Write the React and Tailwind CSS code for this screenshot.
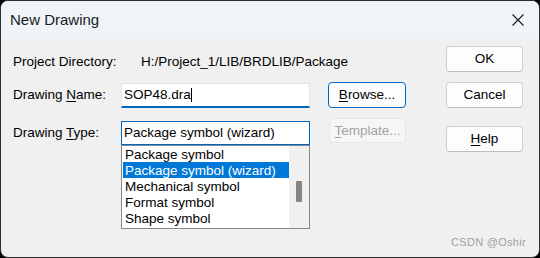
import React from "react";

const font = { fontFamily: '"Liberation Sans", Arial, sans-serif' };

function Btn({ children, className = "" }) {
  return (
    <div
      className={
        "flex items-center justify-center rounded-[4px] text-[13.5px] leading-none " +
        className
      }
    >
      {children}
    </div>
  );
}

export default function App() {
  return (
    <div className="w-[540px] h-[258px] bg-black" style={font}>
      <div className="relative w-full h-full rounded-[8px] border border-[#2e2e2e] overflow-hidden bg-[#f0f0f0] flex flex-col text-black">
        {/* Title bar */}
        <div className="h-[38px] shrink-0 bg-[#eff4f9] flex items-center justify-between pl-[9px] pr-[15px]">
          <span className="text-[15px] leading-none text-[#1a1a1a] -mt-[1px]">New Drawing</span>
          <svg width="12" height="12" viewBox="0 0 12 12" className="-mt-[1px]">
            <path d="M0.5 0.5 L11.5 11.5 M11.5 0.5 L0.5 11.5" stroke="#1a1a1a" strokeWidth="1.1" fill="none" />
          </svg>
        </div>

        {/* Body */}
        <div className="flex-1 flex pl-[12px]">
          {/* Left column */}
          <div className="w-[393px] flex flex-col">
            <div className="mt-[11px] h-[24px] flex items-center text-[13.5px] leading-none">
              <span className="w-[128px]">Project Directory:</span>
              <span>H:/Project_1/LIB/BRDLIB/Package</span>
            </div>

            <div className="mt-[8px] h-[26px] flex items-center text-[13.5px] leading-none">
              <span className="w-[108px]">
                Drawing <span className="underline underline-offset-[2px]">N</span>ame:
              </span>
              <div className="self-end w-[189px] h-[25px] bg-white border border-[#e3e3e3] border-b-2 border-b-[#0067c0] flex items-center pl-[2px]">
                <span>SOP48.dra</span>
                <span className="inline-block w-px h-[14px] bg-black" />
              </div>
              <Btn className="ml-[18px] w-[78px] h-[26px] border border-[#0067c0] bg-[#fdfdfd]">
                <span>
                  <span className="underline underline-offset-[2px]">B</span>rowse...
                </span>
              </Btn>
            </div>

            <div className="mt-[10px] flex items-start text-[13.5px] leading-none">
              <span className="w-[108px] h-[24px] mt-[3px] flex items-center">
                <span>
                  Drawing <span className="underline underline-offset-[2px]">T</span>ype:
                </span>
              </span>
              <div className="mt-[3px] w-[189px] flex flex-col">
                <div className="h-[24px] bg-white border border-[#0067c0] flex items-center pl-[2px]">
                  Package symbol (wizard)
                </div>
                <div className="h-[84px] bg-white border border-[#828790] flex">
                  <div className="flex-1 flex flex-col pl-[1px]">
                    <div className="h-[16px] flex items-center pl-[2px] pt-px">Package symbol</div>
                    <div className="h-[16px] flex items-center pl-[2px] pt-px bg-[#0078d7] text-white">
                      Package symbol (wizard)
                    </div>
                    <div className="h-[16px] flex items-center pl-[2px] pt-px">Mechanical symbol</div>
                    <div className="h-[16px] flex items-center pl-[2px] pt-px">Format symbol</div>
                    <div className="h-[16px] flex items-center pl-[2px] pt-px">Shape symbol</div>
                  </div>
                  <div className="w-[20px] bg-[#f0f0f0] flex justify-center">
                    <div className="mt-[35px] w-[6px] h-[21px] rounded-[1px] bg-[#858585]" />
                  </div>
                </div>
              </div>
              <Btn className="ml-[19px] w-[77px] h-[25px] border border-[#e6e6e6] bg-[#f6f6f6] text-[#a3a3a3]">
                <span>
                  <span className="underline underline-offset-[2px]">T</span>emplate...
                </span>
              </Btn>
            </div>
          </div>

          {/* Right column */}
          <div className="ml-[40px] w-[77px] flex flex-col">
            <Btn className="mt-[7px] h-[26px] border border-[#d0d0d0] border-b-[#bdbdbd] bg-[#fdfdfd]">OK</Btn>
            <Btn className="mt-[10px] h-[26px] border border-[#d0d0d0] border-b-[#bdbdbd] bg-[#fdfdfd]">Cancel</Btn>
            <Btn className="mt-[18px] h-[26px] border border-[#d0d0d0] border-b-[#bdbdbd] bg-[#fdfdfd]">
              <span>
                <span className="underline underline-offset-[2px]">H</span>elp
              </span>
            </Btn>
          </div>
        </div>

        <span className="absolute right-[13px] bottom-[9px] text-[11px] tracking-[0.3px] leading-none text-[#a0a0a0]">
          CSDN @Oshir
        </span>
      </div>
    </div>
  );
}
